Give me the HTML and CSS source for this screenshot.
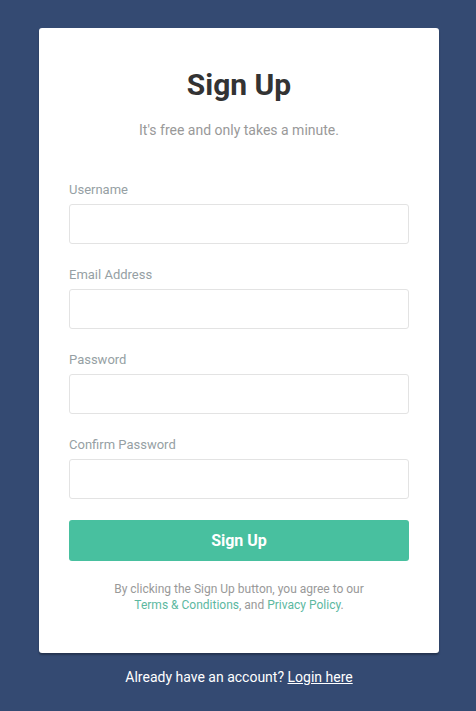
FILE: index.html
```html
<!DOCTYPE html>
<html lang="en">
<head>
<meta charset="utf-8">
<title>Sign Up</title>
<link rel="stylesheet" href="styles.css">
</head>
<body>
<main class="page">
  <form class="card">
    <h2 class="title">Sign Up</h2>
    <p class="subtitle">It's free and only takes a minute.</p>
    <div class="field">
      <label class="label">Username</label>
      <input class="input" type="text">
    </div>
    <div class="field">
      <label class="label">Email Address</label>
      <input class="input" type="email">
    </div>
    <div class="field">
      <label class="label">Password</label>
      <input class="input" type="password">
    </div>
    <div class="field">
      <label class="label">Confirm Password</label>
      <input class="input" type="password">
    </div>
    <button class="btn" type="button">Sign Up</button>
    <p class="terms">By clicking the Sign Up button, you agree to our<br><a href="#" class="terms-link">Terms &amp; Conditions</a>, and <a href="#" class="terms-link">Privacy Policy</a>.</p>
  </form>
  <p class="footer">Already have an account? <a href="#" class="footer-link">Login here</a></p>
</main>
</body>
</html>
```
FILE: styles.css
```css
* { box-sizing: border-box; }
html, body { margin: 0; padding: 0; }
body {
  background: #344a72;
  font-family: Roboto, "Liberation Sans", sans-serif;
  min-height: 711px;
}
.page {
  display: flex;
  flex-direction: column;
  align-items: center;
  padding-top: 28px;
  padding-left: 2px;
}
.card {
  width: 400px;
  background: #fff;
  border-radius: 3px;
  box-shadow: 0 2px 2px rgba(0,0,0,0.3);
  padding: 37px 30px 40px;
  display: flex;
  flex-direction: column;
}
.title {
  margin: 0;
  font-size: 30px;
  line-height: 40px;
  font-weight: 700;
  color: #333;
  text-align: center;
}
.subtitle {
  margin: 15px 0 0;
  font-size: 14px;
  line-height: 20px;
  color: #999;
  text-align: center;
}
.field {
  display: flex;
  flex-direction: column;
  margin-top: 41px;
}
.field + .field { margin-top: 22px; }
.label {
  font-size: 13px;
  line-height: 18px;
  color: #969fa4;
  margin-bottom: 5px;
}
.input {
  height: 40px;
  border: 1px solid #e3e3e3;
  border-radius: 3px;
  background: #fff;
  box-shadow: none;
  outline: none;
  padding: 0 10px;
  font-family: inherit;
  font-size: 14px;
}
.btn {
  margin-top: 21px;
  height: 41px;
  border: none;
  border-radius: 3px;
  background: #48c09f;
  color: #fff;
  font-family: inherit;
  font-size: 16px;
  font-weight: 700;
  cursor: pointer;
}
.terms {
  margin: 20px 0 0;
  font-size: 12px;
  line-height: 16px;
  color: #999;
  text-align: center;
}
.terms-link {
  color: #5cb89f;
  text-decoration: none;
}
.footer {
  margin: 14px 0 0;
  font-size: 14px;
  line-height: 20px;
  color: #fff;
  text-align: center;
}
.footer-link {
  color: #fff;
  text-decoration: underline;
}
```
